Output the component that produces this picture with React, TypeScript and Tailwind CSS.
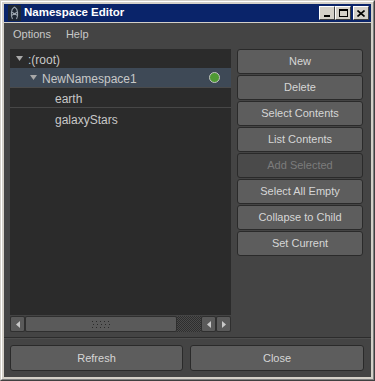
import React from 'react';

const font = { fontFamily: '"Liberation Sans", Arial, sans-serif' };

function TitleButton({ children }: { children: React.ReactNode }) {
  return (
    <div className="w-[16px] h-[14px] bg-[#d4d0c8] border border-t-white border-l-white border-r-[#404040] border-b-[#404040] flex items-center justify-center">
      {children}
    </div>
  );
}

function SideButton({ label, disabled }: { label: string; disabled?: boolean }) {
  return (
    <div
      className={`h-[25px] rounded-[3px] border border-[#2a2a2a] flex items-center justify-center text-[11px] ${
        disabled ? 'bg-[#4a4a4a] text-[#7c7c7c]' : 'bg-[#5d5d5d] text-[#d6d6d6]'
      }`}
    >
      {label}
    </div>
  );
}

function Triangle() {
  return (
    <svg width="7" height="5" viewBox="0 0 7 5" className="shrink-0 mb-[3px]">
      <path d="M0 0 H7 L3.5 5 Z" fill="#a8a8a8" />
    </svg>
  );
}

function ArrowButton({ dir }: { dir: 'left' | 'right' }) {
  return (
    <div className="w-[15px] h-full bg-[#5a5a5a] border border-[#2f2f2f] rounded-[2px] flex items-center justify-center">
      <svg width="4" height="7" viewBox="0 0 4 7">
        {dir === 'left' ? (
          <path d="M4 0 V7 L0 3.5 Z" fill="#c8c8c8" />
        ) : (
          <path d="M0 0 V7 L4 3.5 Z" fill="#c8c8c8" />
        )}
      </svg>
    </div>
  );
}

export default function App() {
  const buttons = [
    'New',
    'Delete',
    'Select Contents',
    'List Contents',
    'Add Selected',
    'Select All Empty',
    'Collapse to Child',
    'Set Current',
  ];

  return (
    <div className="w-[375px] h-[381px] bg-[#d4d0c8] border border-t-[#d4d0c8] border-l-[#d4d0c8] border-r-[#404040] border-b-[#404040]" style={font}>
      <div className="w-full h-full border border-t-white border-l-white border-r-[#808080] border-b-[#808080] p-[2px] flex flex-col">
        {/* title bar */}
        <div className="h-[18px] bg-[#0a246a] flex items-center pl-[4px] pr-[2px]">
          <div className="w-[13px] h-[16px] bg-[#1e2733] flex items-center justify-center">
            <svg width="11" height="14" viewBox="0 0 11 14">
              <path d="M5.5 1 C2 3 1.5 9 3.5 13 M5.5 1 C9 3 9.5 9 7.5 13 M2.5 6 L8.5 9.5 M2.5 9.5 L8.5 6" stroke="#9aa4ae" strokeWidth="1.1" fill="none" />
            </svg>
          </div>
          <span className="ml-[3px] text-white font-bold text-[11.5px] leading-none">Namespace Editor</span>
          <div className="ml-auto flex items-center">
            <TitleButton>
              <div className="w-[6px] h-[2px] bg-black mt-[6px] mr-[1px]" />
            </TitleButton>
            <TitleButton>
              <div className="w-[9px] h-[8px] border border-black border-t-2" />
            </TitleButton>
            <div className="w-[2px]" />
            <TitleButton>
              <svg width="8" height="7" viewBox="0 0 8 7">
                <path d="M0.5 0.5 L7.5 6.5 M7.5 0.5 L0.5 6.5" stroke="black" strokeWidth="1.6" />
              </svg>
            </TitleButton>
          </div>
        </div>

        {/* content */}
        <div className="mt-[1px] flex-1 bg-[#444444] flex flex-col">
          <div className="h-[22px] flex items-center text-[11px] text-[#c8c8c8] pl-[9px]">
            <span>Options</span>
            <span className="ml-[15px]">Help</span>
          </div>

          <div className="mt-[4px] h-[283px] flex pl-[6px]">
            <div className="w-[221px] flex flex-col">
              <div className="flex-1 bg-[#2b2b2b] text-[12px] text-[#c8c8c8]">
                <div className="h-[19px] flex items-center pt-[3px] pl-[6px] gap-[5px]">
                  <Triangle />
                  <span>:(root)</span>
                </div>
                <div className="h-[20px] bg-[#3e4956] flex items-center pt-[3px] pl-[20px] gap-[5px] border-b border-[#4a4a4a]">
                  <Triangle />
                  <span>NewNamespace1</span>
                  <div className="ml-auto mr-[11px] mb-[3px] w-[11px] h-[11px] rounded-full bg-[#4f9a33] border border-[#c4c4c4]" />
                </div>
                <div className="h-[20px] flex items-center pt-[3px] pl-[45px] border-b border-[#474747]">earth</div>
                <div className="h-[20px] flex items-center pt-[3px] pl-[45px]">galaxyStars</div>
              </div>
              {/* scrollbar */}
              <div className="h-[16px] mt-[1px] flex bg-[#3c3c3c]">
                <ArrowButton dir="left" />
                <div className="w-[152px] bg-[#5a5a5a] border border-[#2f2f2f] rounded-[2px] flex items-center justify-center">
                  <svg width="18" height="9" viewBox="0 0 18 9">
                    {[0, 1, 2].map((r) =>
                      [0, 1, 2, 3, 4].map((c) => (
                        <rect key={`${r}-${c}`} x={c * 4 + (r % 2) * 1} y={r * 3 + 1} width="1" height="1" fill="#2a2a2a" />
                      ))
                    )}
                  </svg>
                </div>
                <div
                  className="flex-1"
                  style={{
                    backgroundImage: 'repeating-conic-gradient(#2e2e2e 0% 25%, #4a4a4a 0% 50%)',
                    backgroundSize: '2px 2px',
                  }}
                />
                <ArrowButton dir="left" />
                <ArrowButton dir="right" />
              </div>
            </div>

            <div className="ml-[6px] w-[126px] flex flex-col gap-[1px]">
              {buttons.map((b) => (
                <SideButton key={b} label={b} disabled={b === 'Add Selected'} />
              ))}
            </div>
          </div>

          <div className="mt-[5px] h-[2px] border-t border-[#2c2c2c] border-b border-b-[#4e4e4e]" />

          <div className="mt-[6px] h-[26px] flex pl-[6px] gap-[7px]">
            <div className="w-[173px] rounded-[3px] border border-[#2a2a2a] bg-[#5d5d5d] text-[#d6d6d6] text-[11px] flex items-center justify-center">
              Refresh
            </div>
            <div className="w-[174px] rounded-[3px] border border-[#2a2a2a] bg-[#5d5d5d] text-[#d6d6d6] text-[11px] flex items-center justify-center">
              Close
            </div>
          </div>
        </div>
      </div>
    </div>
  );
}
